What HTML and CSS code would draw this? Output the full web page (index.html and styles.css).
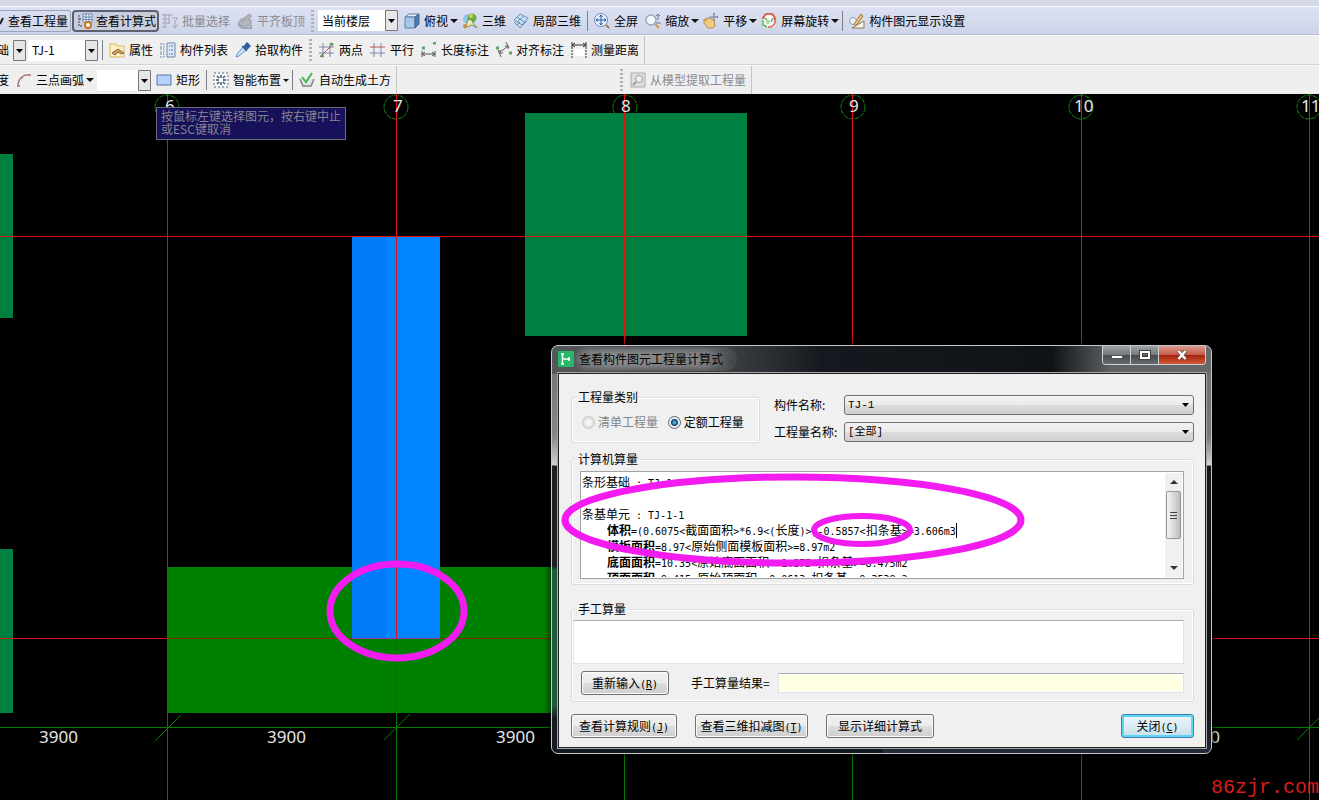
FILE: index.html
```html
<!DOCTYPE html>
<html lang="zh-CN">
<head>
<meta charset="utf-8">
<title>查看构件图元工程量计算式</title>
<link rel="stylesheet" href="styles.css">
</head>
<body>
<div class="app">
<header class="toolbars">
  <div class="row row-view">
    <div class="strip">
      <button class="tool first"><svg class="stub" viewBox="0 0 4 16"><path d="M0 11l3-6" stroke="#222" stroke-width="2"/></svg>查看工程量</button>
      <button class="tool pressed"><svg viewBox="0 0 16 16"><path d="M6 1h9v8H6z" fill="#f4f8ff" stroke="#6b84b4"/><path d="M6 4h9M9 1v8M12 1v8M6 6.500h9" stroke="#6b84b4"/><path d="M2 2v11h4M2 6h3" stroke="#345" fill="none" stroke-dasharray="2 1"/><circle cx="11" cy="12" r="3" fill="#fff" stroke="#c87820" stroke-width="2"/></svg>查看计算式</button>
      <button class="tool" disabled><svg viewBox="0 0 16 16" fill="none" stroke="#a2a5ae"><path d="M0 2h11M0 6h8M0 10h8M0 14h5M3 1v14M7 1v10M10 5h6l-3 3M10 12l3 3 3-4M13 7v8"/></svg>批量选择</button>
      <button class="tool" disabled><svg viewBox="0 0 16 16"><path d="M1 10l3-4h2l6-5 3 2-4 4h3v4l-3 2H5z" fill="#b4b6bd" stroke="#999ca4"/><path d="M4 9l5-3M1 11l4 4h9v-3" fill="none" stroke="#a2a5ae" stroke-width="2"/></svg>平齐板顶</button>
    </div>
    <div class="strip">
      <i class="grip"></i>
      <select class="combo floor" aria-label="楼层"><option>当前楼层</option></select>
      <button class="tool"><svg viewBox="0 0 16 16"><path d="M1 4l4-3h10l-4 3z" fill="#e2f1fc" stroke="#5e7f9f"/><path d="M1 4h10v11H1z" fill="#a5c9ea" stroke="#5e7f9f"/><path d="M11 4l4-3v10l-4 4z" fill="#4b7ab0" stroke="#45698d"/></svg>俯视<b class="caret"></b></button>
      <button class="tool"><svg viewBox="0 0 16 16"><circle cx="6" cy="6" r="5" fill="#8fc4e8"/><circle cx="10" cy="5" r="4.500" fill="#5ab34e"/><path d="M5 8l4-2 2 4 4 5-5-3-8 3 3-4z" fill="#e3efb4" stroke="#7a8f57"/><circle cx="3" cy="13" r="2" fill="#d3894c"/><circle cx="9" cy="3" r="2" fill="#f0c846"/></svg>三维</button>
      <button class="tool"><svg viewBox="0 0 16 16" fill="#c5dff4" stroke="#6d93b9"><path d="M1 7l6-6 8 4-6 7z"/><path d="M4 4l7 5M4 9l7-6M1 9l6 6 7-7M4 12l3-3" fill="none"/></svg>局部三维</button>
      <i class="sep"></i>
      <button class="tool"><svg viewBox="0 0 16 16" fill="none"><circle cx="7" cy="7" r="6.500" fill="#e4f0ff" stroke="#6c8dbc"/><path d="M7 2v10M2 7h10M5.500 4L7 2l1.500 2M5.500 10L7 12l1.500-2M4 5.500L2 7l2 1.500M10 5.500L12 7l-2 1.500" stroke="#315b9c"/><path d="M12 12l3 3" stroke="#a77b45" stroke-width="2"/></svg>全屏</button>
      <button class="tool"><svg viewBox="0 0 16 16" fill="none"><circle cx="6" cy="7" r="5" fill="#f3f8fd" stroke="#98a8bb" stroke-width="1.500"/><path d="M10 11l4 4" stroke="#cc9743" stroke-width="2"/><path d="M13 1v6M11 3l2-2 2 2M11 10h5" stroke="#687895"/></svg>缩放<b class="caret"></b></button>
      <button class="tool"><svg viewBox="0 0 16 16" fill="none"><path d="M1 6l2 2V5l2 1 1-2 2 2 3 1 1 6-2 2H5l-4-5z" fill="#f1cc7e" stroke="#b28c4e"/><path d="M11 0v8M7 4h8M10 1l1-1 1 1M14 3l1 1-1 1" stroke="#687895"/></svg>平移<b class="caret"></b></button>
      <button class="tool"><svg viewBox="0 0 16 16" fill="none"><path d="M1 1h14v14H1z" fill="#f6fbf5" stroke="#c8d5ca"/><path d="M2 6a6 6 0 0 1 12 1" stroke="#e35252" stroke-width="2"/><path d="M14 7a6 6 0 0 1-7 7" stroke="#e47777" stroke-width="2"/><path d="M2 7v5l4 2M4 5l2 2M10 9l2-4" stroke="#5fae62" stroke-width="1.500"/><circle cx="7" cy="9" r="2" fill="#a8d79d"/></svg>屏幕旋转<b class="caret"></b></button>
      <i class="sep"></i>
      <button class="tool"><svg viewBox="0 0 16 16" fill="none"><circle cx="4" cy="8" r="3.500" fill="#e8f1fa" stroke="#8fa0b4"/><path d="M5 11l7-10 2 2-7 10z" fill="#e9c172" stroke="#9d7a3f"/><path d="M3 15h12V8z" fill="#f9f4e8" stroke="#8d7757"/></svg>构件图元显示设置</button>
    </div>
  </div>

  <div class="row">
    <div class="strip">
      <span class="cut">础</span>
      <select class="combo tiny" aria-label="构件类型"><option></option></select>
      <select class="combo member" aria-label="构件"><option>TJ-1</option></select>
      <i class="sep"></i>
      <button class="tool"><svg viewBox="0 0 16 16"><path d="M1 2h6l1 2h7v11H1z" fill="#fff1c4" stroke="#d8b565"/><path d="M3 11l6-4 6 4-3 1-3-2-3 3z" fill="#d59d55" stroke="#8b6b42"/></svg>属性</button>
      <button class="tool"><svg viewBox="0 0 16 16" fill="none"><path d="M0 2h4v3H0M0 7h4v3H0M0 12h4v3H0" stroke="#7485ac" stroke-dasharray="2 1"/><path d="M7 1h8v14H7z" fill="#dce9fa" stroke="#7485ac"/><path d="M9 4h1m1 0h2M9 8h1m1 0h2M9 12h1m1 0h2" stroke="#536aa1"/></svg>构件列表</button>
      <button class="tool"><svg viewBox="0 0 16 16"><path d="M2 12l6-7 3 3-7 6-3 1z" fill="#c8e1fa" stroke="#6894c6"/><path d="M7 4l5 5M9 5l3-4 3 3-4 4z" fill="#305f9d" stroke="#305f9d" stroke-width="1.500"/></svg>拾取构件</button>
    </div>
    <div class="strip lined">
      <i class="grip"></i>
      <button class="tool"><svg viewBox="0 0 16 16" fill="none"><path d="M4 1v14M11 1v14M0 5h15M0 11h15" stroke="#8285a2"/><path d="M1 15L14 2" stroke="#a75b53"/><path d="M2 13l2 2M12 1l2 2" stroke="#47934b" stroke-width="2"/></svg>两点</button>
      <button class="tool"><svg viewBox="0 0 16 16" fill="none"><path d="M4 1v14M11 1v14M0 11h15" stroke="#8085aa"/><path d="M0 5h15" stroke="#b65754"/></svg>平行</button>
      <button class="tool"><svg viewBox="0 0 16 16" fill="none"><path d="M1 9v6M14 9v6M1 12h13M4 10l-3 2 3 2M11 10l3 2-3 2" stroke="#555"/><path d="M1 6h3M12 1h3" stroke="#67a16a" stroke-width="3"/></svg>长度标注</button>
      <button class="tool"><svg viewBox="0 0 16 16" fill="none"><path d="M2 8l3 7M10 0l3 6M3 11l9-7M4 8v3h3M9 4h3v3" stroke="#59605d"/><path d="M0 6h3M13 11h3" stroke="#67a16a" stroke-width="3"/></svg>对齐标注</button>
      <button class="tool"><svg viewBox="0 0 16 16" fill="none"><path d="M1 0v7M15 0v7M1 3h14M4 1L1 3l3 2M12 1l3 2-3 2" stroke="#333"/><path d="M1 8v8M15 8v8" stroke="#333" stroke-dasharray="2 1"/><path d="M3 7h10v7H3z" fill="#fff"/></svg>测量距离</button>
    </div>
  </div>

  <div class="row">
    <div class="strip lined">
      <span class="cut">度</span>
      <button class="tool"><svg viewBox="0 0 16 16" fill="none"><path d="M2 14C2 7 7 2 14 3" stroke="#a27574" stroke-width="1.500"/><path d="M1 14h3M4 6h3M12 3h3" stroke="#b49190" stroke-width="2"/></svg>三点画弧<b class="caret"></b></button>
      <select class="combo arc" aria-label="画弧参数"><option></option></select>
      <button class="tool"><svg viewBox="0 0 16 16"><path d="M1 3h14v10H1z" fill="#b9d1ff" stroke="#5875b3"/></svg>矩形</button>
      <i class="sep"></i>
      <button class="tool"><svg viewBox="0 0 16 16" fill="none"><path d="M1 1h14v14H1z" fill="#f6fafb" stroke="#566976" stroke-dasharray="2 2"/><path d="M8 3v3M8 10v3M3 8h3M10 8h3M4 4l2 2M12 4l-2 2M4 12l2-2M12 12l-2-2" stroke="#3d5467" stroke-width="1.500"/></svg>智能布置<b class="caret small"></b></button>
      <i class="sep"></i>
      <button class="tool"><svg viewBox="0 0 16 16" fill="none"><path d="M1 7l3 7h8l3-7" fill="#e2e8e5" stroke="#788782" stroke-width="1.500"/><path d="M3 5l4 5 6-9" stroke="#4bb64d" stroke-width="2"/></svg>自动生成土方</button>
    </div>
    <div class="strip lined model">
      <i class="grip"></i>
      <button class="tool" disabled><svg viewBox="0 0 16 16" fill="none"><path d="M1 1h14v14H1z" fill="#dedede" stroke="#aaa"/><circle cx="9" cy="7" r="3.500" fill="#eee" stroke="#999"/><path d="M6 10l-3 3" stroke="#999" stroke-width="2"/></svg>从模型提取工程量</button>
    </div>
  </div>
</header>

<main class="canvas">
  <svg class="drawing" aria-label="轴网平面图">
    <g transform="translate(0 -94)" shape-rendering="crispEdges">
      <g class="bubbles">
        <circle cx="167" cy="107" r="12"/><circle cx="396" cy="107" r="12"/><circle cx="625" cy="107" r="12"/>
        <circle cx="853" cy="107" r="12"/><circle cx="1081" cy="107" r="12"/><circle cx="1309" cy="107" r="12"/>
      </g>
      <g class="column">
        <rect x="0" y="154" width="13" height="164"/><rect x="0" y="549" width="13" height="164"/>
        <rect x="525" y="113" width="222" height="223"/>
      </g>
      <rect x="167" y="567" width="458" height="146" fill="#008000"/>
      <g fill="none" stroke="#007d00">
        <path d="M0 727.500H1319M167.500 713V800M396.500 713V800M624.500 713V800M852.500 639V800M1081.500 639V800M1309.500 639V800"/>
        <path shape-rendering="auto" d="M155 741l26-26M384 740l26-26M1297 740l26-26"/>
        <path d="M396.500 639v74" stroke="#007300"/>
      </g>
      <rect x="352" y="237" width="88" height="402" fill="#0084ff"/>
      <rect x="352" y="237" width="34" height="402" fill="#007bf8"/>
      <g fill="none" stroke="#e01010">
        <path d="M0 236.500H1319M167.500 94V639M396.500 94V639M624.500 94V639M852.500 94V639M1081.500 94V639M1309.500 94V639M0 638.500H167M625 638.500H1319"/>
        <path d="M167 638.500H625" stroke="#8b2800"/>
        <path d="M352 638.500H440" stroke="#9a35a8"/>
      </g>
    </g>
    <g class="labels" transform="translate(0 -94)">
      <text x="165" y="112">6</text><text x="393" y="112">7</text><text x="621" y="112">8</text>
      <text x="849" y="112">9</text><text x="1074" y="112">10</text><text x="1301" y="112">11</text>
      <text x="39" y="743">3900</text><text x="267" y="743">3900</text><text x="496" y="743">3900</text>
      <text x="1181" y="743">3900</text>
    </g>
  </svg>
  <div class="hint">按鼠标左键选择图元，按右键中止<br>或ESC键取消</div>

  <section class="dialog" role="dialog" aria-labelledby="dlg-title">
    <div class="titlebar">
      <svg class="logo" viewBox="0 0 16 16"><rect width="16" height="16" rx="1" fill="#27b66a"/><path d="M3 3h3M4.500 3v10M3 13h3M5 8h7M11 6v4" fill="none" stroke="#fff" stroke-width="1.500"/></svg>
      <h1 id="dlg-title">查看构件图元工程量计算式</h1>
      <div class="winbtns">
        <button aria-label="最小化"><svg viewBox="0 0 12 12"><path d="M.5 6.500h11v3H.5z" fill="#fff" stroke="#555"/></svg></button>
        <button aria-label="最大化"><svg viewBox="0 0 12 12"><path d="M2 3h8v6H2z" fill="none" stroke="#444" stroke-width="4"/><path d="M2 3h8v6H2z" fill="none" stroke="#fff" stroke-width="2"/></svg></button>
        <button class="x" aria-label="关闭窗口"><svg viewBox="0 0 12 12"><path d="M2.500 2l7 8M9.500 2l-7 8" stroke="#644" stroke-width="4"/><path d="M2.500 2l7 8M9.500 2l-7 8" stroke="#fff" stroke-width="2.500"/></svg></button>
      </div>
    </div>
    <form class="body" onsubmit="return false">
      <div class="top">
        <fieldset class="kind">
          <legend>工程量类别</legend>
          <label class="off"><input type="radio" name="kind" disabled>清单工程量</label>
          <label><input type="radio" name="kind" checked>定额工程量</label>
        </fieldset>
        <div class="names">
          <label for="member">构件名称:</label><select id="member"><option>TJ-1</option></select>
          <label for="qty">工程量名称:</label><select id="qty"><option>[全部]</option></select>
        </div>
      </div>
      <fieldset class="auto">
        <legend>计算机算量</legend>
        <div class="result">
          <div class="lines" role="textbox" aria-multiline="true" aria-label="计算式" tabindex="0">
            <p><span>条形基础</span> : TJ-1</p>
            <p>&nbsp;</p>
            <p><span>条基单元</span> : TJ-1-1</p>
            <p class="in"><b>体积</b>=(0.6075&lt;<span>截面面积</span>&gt;*6.9&lt;(<span>长度</span>)&gt;)-0.5857&lt;<span>扣条基</span>&gt;=3.606m3<i class="cursor"></i></p>
            <p class="in"><b>模板面积</b>=8.97&lt;<span>原始侧面模板面积</span>&gt;=8.97m2</p>
            <p class="in"><b>底面面积</b>=10.35&lt;<span>原始底面面积</span>&gt;-1.875&lt;<span>扣条基</span>&gt;=8.475m2</p>
            <p class="in"><b>顶面面积</b>=9.415&lt;<span>原始顶面积</span>&gt;-0.0613&lt;<span>扣条基</span>&gt;=9.3538m2</p>
          </div>
          <div class="scroll"><i class="up"></i><div class="thumb"><i></i><i></i><i></i></div><i class="down"></i></div>
        </div>
      </fieldset>
      <fieldset class="manual">
        <legend>手工算量</legend>
        <textarea aria-label="手工算量"></textarea>
        <div class="redo">
          <button class="btn w-redo">重新输入<kbd>(<u>R</u>)</kbd></button>
          <label for="res">手工算量结果=</label>
          <input id="res" type="text" readonly>
        </div>
      </fieldset>
      <div class="actions">
        <button class="btn w-rule">查看计算规则<kbd>(<u>J</u>)</kbd></button>
        <button class="btn w-3d">查看三维扣减图<kbd>(<u>T</u>)</kbd></button>
        <button class="btn w-detail">显示详细计算式</button>
        <button class="btn close">关闭<kbd>(<u>C</u>)</kbd></button>
      </div>
    </form>
  </section>

  <svg class="marks" aria-hidden="true">
    <g transform="translate(0 -94)" fill="none" stroke="#f31cf0" stroke-width="7">
      <ellipse cx="397" cy="611" rx="67" ry="47"/>
      <ellipse cx="793" cy="520" rx="228" ry="43"/>
      <ellipse cx="862" cy="530" rx="48" ry="14" stroke-width="6"/>
    </g>
  </svg>
  <div class="site">86zjr.com</div>
</main>
</div>
</body>
</html>
```
FILE: styles.css
```css
* { box-sizing: border-box; }
body { margin: 0; font: 12px/16px "Noto Sans CJK SC", sans-serif; color: #000; background: #000; }
button, select, input, textarea { font: inherit; color: inherit; margin: 0; }
p, h1 { margin: 0; }
.app { height: 100vh; display: flex; flex-direction: column; overflow: hidden; }

/* toolbars */
.toolbars { background: #efefef; border-top: 6px solid #d4d9ea; flex: none; overflow: hidden; }
.row { display: flex; height: 30px; border-bottom: 1px solid #d2d2d2; border-top: 1px solid #fafafa; }
.row:last-child { border-bottom: 0; height: 29px; }
.row-view { height: 29px; background: linear-gradient(#dce0f2, #cfd5e9); border-bottom-color: #b9bdcb; }
.strip { display: flex; align-items: center; flex: none; }
.lined { border-right: 1px solid #c4c4c4; padding-right: 1px; }
.tool { display: flex; align-items: center; gap: 4px; height: 22px; padding: 0 4px 0 3px; border: 0; background: none; white-space: nowrap; }
.tool svg { width: 16px; height: 16px; flex: none; }
.tool:disabled { color: #8a8a8f; }
.tool.first { padding: 0 2px 0 0; border: 1px solid #9da3b8; border-left: 0; border-radius: 0 3px 3px 0; }
.tool svg.stub { width: 4px; }
.tool.pressed { border: 2px solid #5d6170; border-radius: 4px; background: #c9cede; padding: 0 1px 0 3px; gap: 3px; margin-left: 1px; }
.caret { border: 4px solid transparent; border-top: 4px solid #111; border-bottom: 0; margin: 0 -3px 0 -2px; }
.caret.small { border-width: 3px 3px 0; }
.sep { width: 1px; height: 20px; background: #7e8088; margin: 0 3px 0 2px; }
.grip { width: 3px; height: 22px; margin: 0 4px 0 2px; background: repeating-linear-gradient(#b0b2bb 0 2px, transparent 2px 4px); }
.cut { width: 13px; text-indent: -3px; overflow: hidden; flex: none; }
.combo { appearance: none; height: 21px; border: 0; border-radius: 0; padding: 0 14px 0 4px; background: #fff url("data:image/svg+xml,%3Csvg xmlns='http://www.w3.org/2000/svg' width='13' height='21'%3E%3Cpath d='M.5.5h12v20H.5z' fill='%23e6e6e6' stroke='%23777'/%3E%3Cpath d='M3 9h7l-3.500 4z'/%3E%3C/svg%3E") right center no-repeat; }
.floor { width: 80px; margin-right: 3px; }
.tiny { width: 13px; padding: 0; margin-right: 2px; }
.member { width: 70px; margin-right: 2px; }
.arc { width: 54px; margin: 0 2px; }
.model { margin-left: 221px; }

/* drawing area */
.canvas { position: relative; flex: 1; min-height: 0; background: #000; overflow: hidden; }
.drawing, .marks { position: absolute; inset: 0; width: 100%; height: 100%; }
.marks { pointer-events: none; }
.bubbles circle { fill: none; stroke: #138a13; shape-rendering: auto; stroke-dasharray: 5 1; }
.column rect { fill: #008040; }
.labels { fill: #e6e6e6; font: 17px "Noto Sans", sans-serif; }
.hint { position: absolute; left: 156px; top: 13px; width: 190px; padding: 1px 4px 4px; border: 1px solid #6a6a78; background: #17105a; color: #85858f; line-height: 13px; white-space: nowrap; }
.site { position: absolute; right: 0; bottom: 0; color: #d81c1c; font: 20px/24px "Liberation Mono", monospace; }

/* dialog window */
.dialog { position: absolute; left: 551px; top: 251px; width: 661px; padding: 0 5px 5px; border: 1px solid #c4c6c8; border-radius: 7px; box-shadow: 0 0 8px #000;
  background: linear-gradient(90deg, #55585a, #3b3e41 180px, #15191f 270px, #101316 500px, #606366 560px, #66696c) top / 100% 28px no-repeat,
    linear-gradient(#6b6e70, #85888a 90px, #d0d2d3 119px, #1a2023 120px, #1a2023 220px, #205a3c 224px, #205a3c 360px, #151a22 372px) left / 50% 100% no-repeat,
    linear-gradient(#6b6e70, #77797b 90px, #d0d2d3 119px, #15191d 120px, #0f1216 360px, #252a3a) right / 50% 100% no-repeat; }
.titlebar { display: flex; align-items: flex-start; height: 27px; }
.logo { width: 16px; height: 16px; margin: 5px 0 0 1px; }
.titlebar h1 { font-size: 12px; line-height: 16px; font-weight: 400; margin: 1px auto 0 0; padding: 4px 14px 4px 5px; background: linear-gradient(90deg, #77797b, #8a8c8e 20%, #808284 80%, transparent); border-radius: 12px; box-shadow: inset 0 0 6px 2px #4a4d50; }
.winbtns { display: flex; border: 1px solid #cfd1d3; border-top: 0; border-radius: 0 0 4px 4px; overflow: hidden; }
.winbtns button { width: 28px; height: 18px; padding: 0; border: 0; border-right: 1px solid #cfd1d3; background: linear-gradient(#a0a3a6, #75787b 50%, #494c4f 51%, #666a6d); display: flex; align-items: center; justify-content: center; }
.winbtns .x { width: 46px; border: 0; background: linear-gradient(#d99b8e, #c85a48 50%, #a5200c 51%, #cf5c36); }
.winbtns svg { width: 12px; height: 12px; }
.body { background: #f0f0f0; border: 1px solid #222; box-shadow: 0 0 0 1px #a5a7a9; margin: 0 0 0 1px; padding: 16px 11px 9px 12px; }

fieldset { margin: 0; padding: 0; border: 1px solid #dcdcdc; border-radius: 3px; box-shadow: inset 0 0 0 1px #fff; min-width: 0; }
legend { margin-left: 5px; padding: 0 1px; line-height: 14px; background: #f0f0f0; }
.top { display: flex; gap: 14px; }
.kind { flex: 0 0 189px; height: 53px; }
.kind label { display: inline-flex; align-items: center; gap: 3px; margin: 10px 0 0 10px; }
.kind label + label { margin-left: 7px; }
.off { color: #858585; }
.kind input { appearance: none; width: 13px; height: 13px; border: 1px solid #8c8f91; border-radius: 50%; background: #f4f4f4; box-shadow: inset 0 0 0 2px #e2e2e2; }
.kind input:checked { background: radial-gradient(circle, #4ba8d8 0 1px, #123c60 3px, #e8eef2 4px); border-color: #5a6670; box-shadow: none; }
.kind input:disabled { border-color: #c4c4c4; }
.names { flex: 1; display: grid; grid-template-columns: 70px 1fr; row-gap: 7px; align-content: start; align-items: center; padding-top: 5px; }
.names select { appearance: none; width: 100%; height: 20px; border: 1px solid #707070; border-radius: 3px; padding: 0 16px 0 3px; font: 11px "Liberation Mono", "Noto Sans CJK SC", monospace;
  background: url("data:image/svg+xml,%3Csvg xmlns='http://www.w3.org/2000/svg' width='7' height='4'%3E%3Cpath d='M0 0h7L3.500 4z'/%3E%3C/svg%3E") right 4px center no-repeat, linear-gradient(#f2f2f2, #ebebeb 50%, #dddddd 51%, #cfcfcf); }

.auto { margin-top: 9px; height: 133px; }
.result { display: flex; height: 108px; margin: 5px 9px 0 8px; border: 1px solid #a0a2a6; background: #fff; }
.lines { flex: 1; min-width: 0; overflow: hidden; padding: 2px 0 0 1px; margin-bottom: 1px; outline: 0; font: 10px/16px "DejaVu Sans Mono", monospace; white-space: nowrap; }
.lines p { height: 16px; display: flex; align-items: baseline; white-space: pre; }
.lines .in { padding-left: 25px; }
.lines span, .lines b { font: 12px/16px "Noto Sans CJK SC", sans-serif; }
.lines b { font-weight: 700; }
.cursor { width: 1px; height: 15px; background: #000; align-self: center; }
.scroll { width: 17px; margin: 1px; background: #f0f0f0; display: flex; flex-direction: column; align-items: center; }
.up, .down { border: 4px solid transparent; border-top: 0; border-bottom: 4px solid #333; margin: 7px 0 7px; }
.down { border-bottom: 0; border-top: 4px solid #333; margin: auto 0 7px; }
.thumb { width: 15px; height: 48px; border: 1px solid #979797; border-radius: 2px; background: linear-gradient(90deg, #f5f5f5, #dadada 50%, #bcbcbc); display: flex; flex-direction: column; gap: 2px; align-items: center; justify-content: center; }
.thumb i { width: 7px; height: 1px; background: #444; }

.manual { margin-top: 17px; height: 100px; }
.manual textarea { display: block; width: calc(100% - 10px); height: 44px; margin: 4px 0 0 1px; border: 1px solid #e2e3ea; border-top-color: #abadb3; background: #fff; resize: none; outline: 0; }
.redo { display: flex; align-items: center; margin: 7px 9px 0 9px; }
.redo label { margin: 0 8px 0 22px; }
.redo input { flex: 1; height: 20px; border: 1px solid #e2e3ea; border-top-color: #abadb3; background: #ffffe1; box-shadow: inset 0 0 0 1px #fff; }
.btn { height: 24px; padding: 0; border: 1px solid #707070; border-radius: 3px; box-shadow: inset 0 0 0 1px #fbfbfb; background: linear-gradient(#f2f2f2, #ebebeb 50%, #dddddd 51%, #cfcfcf); white-space: nowrap; }
.btn kbd { font: 10px/14px "DejaVu Sans Mono", monospace; }
.w-redo { width: 88px; }
.w-rule { width: 106px; }
.w-3d { width: 113px; }
.w-detail { width: 108px; }
.actions { display: flex; gap: 18px; margin-top: 12px; }
.close { width: 73px; margin-left: auto; border-color: #3c7fb1; box-shadow: inset 0 0 0 2px #5fd4f4; background: linear-gradient(#eef6fa, #dcebf2 50%, #c6dfea); }
```
